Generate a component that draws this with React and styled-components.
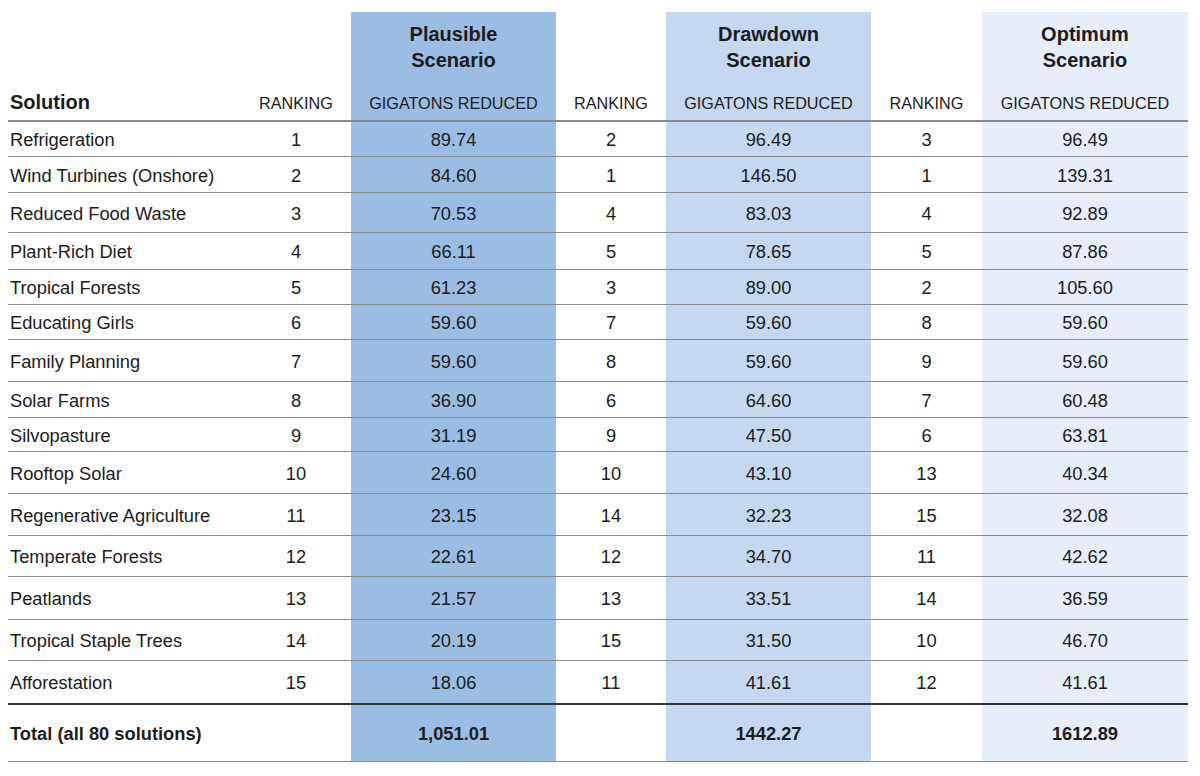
import React from "react";
import styled, { createGlobalStyle } from "styled-components";

const Global = createGlobalStyle`
  html, body { margin: 0; padding: 0; background: #ffffff; }
  body { font-family: "Liberation Sans", Arial, Helvetica, sans-serif; color: #1c1c1c; }
`;

const COLS = "233px 110px 205px 110px 205px 111px 206px";
const SHADES = ["#9bbce3", "#c5d8ef", "#e5eef9"];

const Page = styled.div`
  padding: 12px 12px 0 8px;
  width: 1180px;
`;

const Table = styled.div`
  display: flex;
  flex-direction: column;
`;

const Row = styled.div`
  display: grid;
  grid-template-columns: ${COLS};
  height: ${(p) => p.$h}px;
  box-sizing: border-box;
  border-bottom: ${(p) => p.$line || "1px solid #8a8a8a"};
`;

const Cell = styled.div`
  display: flex;
  align-items: center;
  justify-content: ${(p) => (p.$left ? "flex-start" : "center")};
  padding-left: ${(p) => (p.$left ? "2px" : "0")};
  padding-top: 2px;
  background: ${(p) => p.$bg || "transparent"};
  font-size: 18.3px;
  font-weight: ${(p) => (p.$bold ? 700 : 400)};
  white-space: nowrap;
`;

const HeadCell = styled.div`
  display: flex;
  flex-direction: column;
  justify-content: ${(p) => (p.$split ? "space-between" : "flex-end")};
  align-items: ${(p) => (p.$left ? "flex-start" : "center")};
  padding: 9px 0 7px ${(p) => (p.$left ? "2px" : "0")};
  background: ${(p) => p.$bg || "transparent"};
  text-align: center;
`;

const ScenarioTitle = styled.div`
  font-size: 20px;
  line-height: 26px;
  font-weight: 700;
`;

const SolutionTitle = styled.div`
  font-size: 20px;
  line-height: 26px;
  font-weight: 700;
  margin-bottom: -2px;
`;

const SubHead = styled.div`
  font-size: 16.2px;
  line-height: 20px;
`;

const rows = [
  ["Refrigeration", 1, "89.74", 2, "96.49", 3, "96.49", 35],
  ["Wind Turbines (Onshore)", 2, "84.60", 1, "146.50", 1, "139.31", 36],
  ["Reduced Food Waste", 3, "70.53", 4, "83.03", 4, "92.89", 40],
  ["Plant-Rich Diet", 4, "66.11", 5, "78.65", 5, "87.86", 37],
  ["Tropical Forests", 5, "61.23", 3, "89.00", 2, "105.60", 35],
  ["Educating Girls", 6, "59.60", 7, "59.60", 8, "59.60", 35],
  ["Family Planning", 7, "59.60", 8, "59.60", 9, "59.60", 42],
  ["Solar Farms", 8, "36.90", 6, "64.60", 7, "60.48", 36],
  ["Silvopasture", 9, "31.19", 9, "47.50", 6, "63.81", 34],
  ["Rooftop Solar", 10, "24.60", 10, "43.10", 13, "40.34", 42],
  ["Regenerative Agriculture", 11, "23.15", 14, "32.23", 15, "32.08", 42],
  ["Temperate Forests", 12, "22.61", 12, "34.70", 11, "42.62", 41],
  ["Peatlands", 13, "21.57", 13, "33.51", 14, "36.59", 43],
  ["Tropical Staple Trees", 14, "20.19", 15, "31.50", 10, "46.70", 41],
  ["Afforestation", 15, "18.06", 11, "41.61", 12, "41.61", 44],
];

const scenarios = [
  ["Plausible", "Scenario"],
  ["Drawdown", "Scenario"],
  ["Optimum", "Scenario"],
];

export default function App() {
  return (
    <>
      <Global />
      <Page>
        <Table>
          <Row $h={110} $line="2px solid #8a8a8a">
            <HeadCell $left>
              <SolutionTitle>Solution</SolutionTitle>
            </HeadCell>
            {scenarios.map((s, i) => (
              <React.Fragment key={s[0]}>
                <HeadCell>
                  <SubHead>RANKING</SubHead>
                </HeadCell>
                <HeadCell $split $bg={SHADES[i]}>
                  <ScenarioTitle>
                    {s[0]}
                    <br />
                    {s[1]}
                  </ScenarioTitle>
                  <SubHead>GIGATONS REDUCED</SubHead>
                </HeadCell>
              </React.Fragment>
            ))}
          </Row>
          {rows.map((r, idx) => (
            <Row
              key={r[0]}
              $h={r[7]}
              $line={idx === rows.length - 1 ? "2px solid #333333" : undefined}
            >
              <Cell $left>{r[0]}</Cell>
              <Cell>{r[1]}</Cell>
              <Cell $bg={SHADES[0]}>{r[2]}</Cell>
              <Cell>{r[3]}</Cell>
              <Cell $bg={SHADES[1]}>{r[4]}</Cell>
              <Cell>{r[5]}</Cell>
              <Cell $bg={SHADES[2]}>{r[6]}</Cell>
            </Row>
          ))}
          <Row $h={57}>
            <Cell $left $bold>Total (all 80 solutions)</Cell>
            <Cell />
            <Cell $bg={SHADES[0]} $bold>1,051.01</Cell>
            <Cell />
            <Cell $bg={SHADES[1]} $bold>1442.27</Cell>
            <Cell />
            <Cell $bg={SHADES[2]} $bold>1612.89</Cell>
          </Row>
        </Table>
      </Page>
    </>
  );
}
